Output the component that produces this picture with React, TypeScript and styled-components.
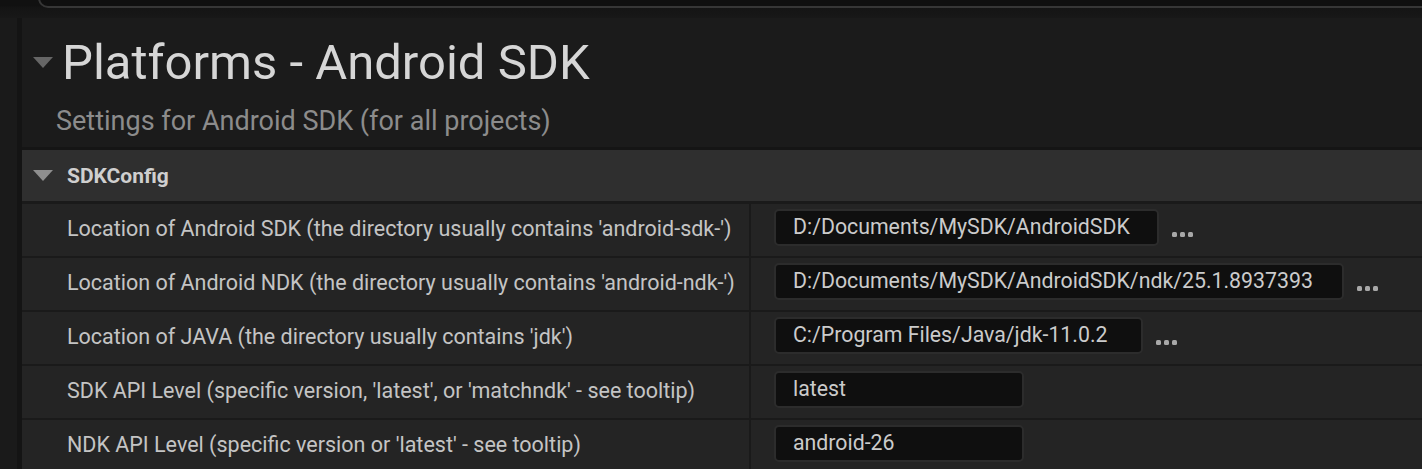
import React from "react";
import styled, { createGlobalStyle } from "styled-components";

const Global = createGlobalStyle`
  html, body { margin: 0; padding: 0; background: #151515; }
  body { font-family: Roboto, "Liberation Sans", sans-serif; overflow: hidden; }
`;

const Page = styled.div`
  width: 1422px;
  height: 469px;
  display: flex;
  flex-direction: column;
  background: #181818;
  overflow: hidden;
`;

const TopStrip = styled.div`
  height: 18px;
  flex: none;
  background: linear-gradient(#111 0, #111 6px, #141414 7px, #181818 18px);
  overflow: hidden;
`;

const SearchBox = styled.div`
  margin-left: 38px;
  margin-top: -30px;
  height: 34px;
  border: 2px solid #363636;
  border-radius: 10px;
  background: #0f0f0f;
  margin-right: -20px;
`;

const Body = styled.div`
  flex: 1;
  display: flex;
`;

const LeftGutter = styled.div`
  width: 17px;
  flex: none;
  background: #1a1a1a;
  border-right: 5px solid #141414;
`;

const Panel = styled.div`
  flex: 1;
  display: flex;
  flex-direction: column;
  background: #1b1b1b;
`;

const Header = styled.div`
  height: 129px;
  flex: none;
  display: flex;
  flex-direction: column;
`;

const TitleRow = styled.div`
  display: flex;
  align-items: center;
  height: 88px;
  padding-left: 11px;
`;

const Triangle = styled.span<{ $w: number; $h: number; $color: string }>`
  width: 0;
  height: 0;
  border-left: ${(p) => p.$w / 2}px solid transparent;
  border-right: ${(p) => p.$w / 2}px solid transparent;
  border-top: ${(p) => p.$h}px solid ${(p) => p.$color};
  flex: none;
`;

const Title = styled.h1`
  margin: 0 0 0 9px;
  font-size: 49px;
  font-weight: 400;
  color: #d6d6d6;
  line-height: 1;
`;

const Subtitle = styled.div`
  padding-left: 34px;
  font-size: 27px;
  color: #8c8c8c;
  line-height: 1;
  margin-top: 2px;
`;

const Category = styled.div`
  height: 51px;
  flex: none;
  display: flex;
  align-items: center;
  padding-left: 11px;
  background: #2f2f2f;
  border-top: 3px solid #151515;
  border-bottom: 3px solid #1a1a1a;
`;

const CategoryLabel = styled.span`
  margin-left: 14px;
  font-size: 21px;
  font-weight: 700;
  color: #cfcfcf;
`;

const Row = styled.div`
  height: 52px;
  flex: none;
  display: grid;
  grid-template-columns: 727px 2px 1fr;
  background: #242424;
  border-bottom: 2px solid #1a1a1a;
`;

const Label = styled.div`
  display: flex;
  align-items: center;
  padding: 0 0 3px 45px;
  font-size: 21.5px;
  color: #c4c4c4;
  white-space: nowrap;
`;

const Divider = styled.div`
  background: #1a1a1a;
`;

const ValueCell = styled.div`
  display: flex;
  align-items: center;
  padding-left: 23px;
`;

const Input = styled.div<{ $w: number }>`
  width: ${(p) => p.$w}px;
  box-sizing: border-box;
  height: 37px;
  margin-top: -5px;
  background: #0f0f0f;
  border: 2px solid #2c2c2c;
  border-radius: 5px;
  display: flex;
  align-items: center;
  padding: 0 0 3px 17px;
  font-size: 21.3px;
  color: #cbcbcb;
  white-space: nowrap;
`;

const Dots = styled.div`
  display: flex;
  gap: 3px;
  margin-left: 13px;
  margin-top: 8px;
`;

const Dot = styled.span`
  width: 5px;
  height: 5px;
  border-radius: 1.5px;
  background: #a8a8a8;
`;

const rows = [
  { label: "Location of Android SDK (the directory usually contains 'android-sdk-')", value: "D:/Documents/MySDK/AndroidSDK", w: 385, dots: true },
  { label: "Location of Android NDK (the directory usually contains 'android-ndk-')", value: "D:/Documents/MySDK/AndroidSDK/ndk/25.1.8937393", w: 570, dots: true },
  { label: "Location of JAVA (the directory usually contains 'jdk')", value: "C:/Program Files/Java/jdk-11.0.2", w: 369, dots: true },
  { label: "SDK API Level (specific version, 'latest', or 'matchndk' - see tooltip)", value: "latest", w: 250, dots: false },
  { label: "NDK API Level (specific version or 'latest' - see tooltip)", value: "android-26", w: 250, dots: false },
];

export default function App() {
  return (
    <Page>
      <Global />
      <TopStrip>
        <SearchBox />
      </TopStrip>
      <Body>
        <LeftGutter />
        <Panel>
          <Header>
            <TitleRow>
              <Triangle $w={20} $h={11} $color="#666666" />
              <Title>Platforms - Android SDK</Title>
            </TitleRow>
            <Subtitle>Settings for Android SDK (for all projects)</Subtitle>
          </Header>
          <Category>
            <Triangle $w={20} $h={11} $color="#8e8e8e" />
            <CategoryLabel>SDKConfig</CategoryLabel>
          </Category>
          {rows.map((r) => (
            <Row key={r.label}>
              <Label>{r.label}</Label>
              <Divider />
              <ValueCell>
                <Input $w={r.w}>{r.value}</Input>
                {r.dots && (
                  <Dots>
                    <Dot />
                    <Dot />
                    <Dot />
                  </Dots>
                )}
              </ValueCell>
            </Row>
          ))}
        </Panel>
      </Body>
    </Page>
  );
}
